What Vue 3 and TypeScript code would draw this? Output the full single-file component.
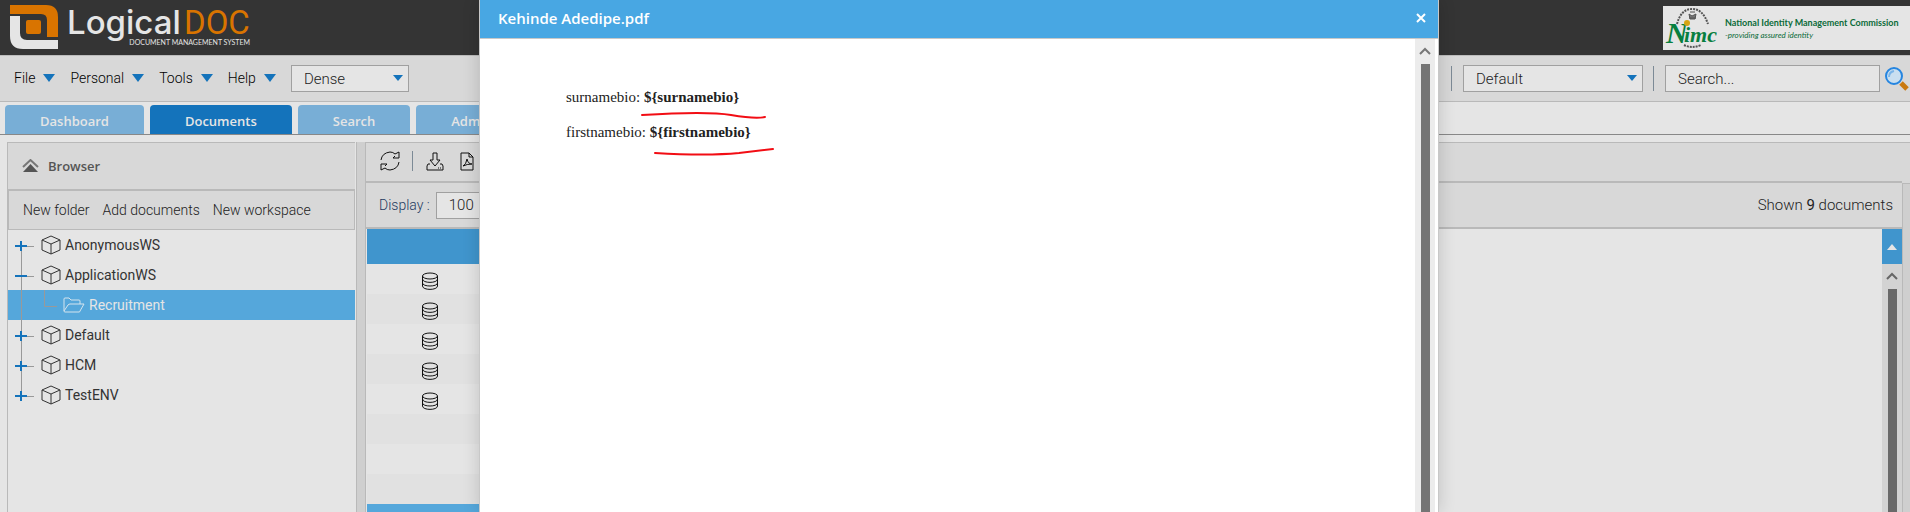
<script setup lang="ts">
import { ref } from 'vue'

interface Folder {
  name: string
  state: 'open' | 'closed'
  children: string[]
}

const menus: string[] = ['File', 'Personal', 'Tools', 'Help']
const tabs: string[] = ['Dashboard', 'Documents', 'Search', 'Administration']
const activeTab = ref('Documents')
const selected = ref('Recruitment')
const density = ref('Dense')
const searchMode = ref('Default')
const pageSize = ref('100')
const query = ref('')
const folders: Folder[] = [
  { name: 'AnonymousWS', state: 'closed', children: [] },
  { name: 'ApplicationWS', state: 'open', children: ['Recruitment'] },
  { name: 'Default', state: 'closed', children: [] },
  { name: 'HCM', state: 'closed', children: [] },
  { name: 'TestENV', state: 'closed', children: [] },
]
const fields: string[] = ['surnamebio', 'firstnamebio']
const documentRows: boolean[] = [true, true, true, true, true, false, false, false]
</script>

<template>
  <div class="page">
    <header class="banner">
      <svg class="logo" width="260" height="55" viewBox="0 0 260 55" role="img" aria-label="LogicalDOC">
        <path d="M10 5h36q12 0 12 12v20H47V20q0-6-6-6H10z" fill="#d97400" />
        <rect x="26" y="20" width="15" height="14" rx="2" fill="#d97400" />
        <path d="M10 16h10v17q0 7 7 7h31v9H23Q10 49 10 36z" fill="#e5e5e5" />
        <text x="67" y="34" class="logo-name">Logical</text>
        <text x="184" y="34" class="logo-doc">DOC</text>
        <text x="250" y="45" text-anchor="end" class="logo-sub">DOCUMENT MANAGEMENT SYSTEM</text>
      </svg>
      <div class="nimc">
        <svg width="54" height="44" viewBox="0 0 54 44" role="img" aria-label="Nimc">
          <path d="M14 18Q18 3 29 3T45 18" fill="none" stroke="#555" stroke-width="2" stroke-dasharray="2 1" />
          <path d="M21 39q8 4 17 0" fill="none" stroke="#555" stroke-width="2" stroke-dasharray="2 1" />
          <path d="M26 8l3 2 4-2-1 5h-5zM27 6h5M26 12h7" fill="#777" stroke="#555" />
          <text x="3" y="37" class="nimc-mark">N</text>
          <text x="21" y="36" class="nimc-mark nimc-small">imc</text>
          <circle cx="24" cy="17" r="3" fill="#d6a512" />
        </svg>
        <div class="nimc-text">
          <strong>National Identity Management Commission</strong>
          <em>-providing assured identity</em>
        </div>
      </div>
    </header>

    <nav class="menubar">
      <button v-for="m in menus" :key="m" class="menu">
        {{ m }}
        <svg width="12" height="8" viewBox="0 0 12 8"><path d="M0 0h12L6 8z" fill="#1473bb" /></svg>
      </button>
      <div class="combo density">
        <select v-model="density" aria-label="Density"><option>Dense</option></select>
        <svg width="10" height="6" viewBox="0 0 10 6"><path d="M0 0h10L5 6z" fill="#1473bb" /></svg>
      </div>
      <div class="search">
        <span class="rule"></span>
        <div class="combo mode">
          <select v-model="searchMode" aria-label="Search mode"><option>Default</option></select>
          <svg width="10" height="6" viewBox="0 0 10 6"><path d="M0 0h10L5 6z" fill="#1473bb" /></svg>
        </div>
        <span class="rule"></span>
        <input v-model="query" type="text" placeholder="Search..." aria-label="Search" />
        <button class="find" aria-label="Run search">
          <svg width="24" height="24" viewBox="0 0 24 24">
            <path d="M16 16l6 6" stroke="#c97a10" stroke-width="5" />
            <circle cx="9" cy="9" r="8" fill="#c9dff0" stroke="#2585e0" stroke-width="2" />
            <path d="M4 10q0-5 5-6" fill="none" stroke="#7bb5e8" stroke-width="2" />
          </svg>
        </button>
      </div>
    </nav>

    <div class="tabs" role="tablist">
      <button
        v-for="t in tabs"
        :key="t"
        role="tab"
        :aria-selected="t === activeTab"
        :class="['tab', { active: t === activeTab }]"
        @click="activeTab = t"
      >{{ t }}</button>
    </div>

    <main class="workspace">
      <aside class="browser">
        <h2>
          <svg width="17" height="14" viewBox="0 0 17 14">
            <path d="M1 8l7.500-7L16 8" fill="none" stroke="#777" stroke-width="2" />
            <path d="M1 13l7.500-8 7.500 8z" fill="#555" />
          </svg>
          Browser
        </h2>
        <div class="actions">
          <button>New folder</button>
          <button>Add documents</button>
          <button>New workspace</button>
        </div>
        <ul class="tree">
          <template v-for="(f, i) in folders" :key="f.name">
            <li class="node">
              <svg width="28" height="30" viewBox="0 0 28 30">
                <path
                  :d="i === 0 ? 'M13.500 15v15' : i === folders.length - 1 ? 'M13.500 0v15' : 'M13.500 0v30'"
                  stroke="#999"
                />
                <path d="M13 16.500h13" stroke="#999" />
                <path d="M7 16h12" stroke="#1473bb" stroke-width="2" />
                <path v-if="f.state === 'closed'" d="M13 11v10" stroke="#1473bb" stroke-width="2" />
              </svg>
              <svg width="20" height="20" viewBox="0 0 20 20" fill="none" stroke="#333">
                <path d="M10 1l9 4v10l-9 4-9-4V5zM1 5l9 4 9-4M10 9v10" />
              </svg>
              <button>{{ f.name }}</button>
            </li>
            <li v-for="c in f.children" :key="c" :class="['node', { selected: c === selected }]">
              <svg width="50" height="30" viewBox="0 0 50 30">
                <path d="M13.500 0v30M36.500 0v16.500H49" fill="none" stroke="#999" />
              </svg>
              <svg width="22" height="16" viewBox="0 0 22 16" fill="none" stroke="#d5e4ee">
                <path d="M1 14V2q0-1 1-1h4l2 2h8q1 0 1 1v3M1 14l4-6q1-1 2-1h14l-4 7q0 1-1 1H2q-1 0-1-1z" />
              </svg>
              <button @click="selected = c">{{ c }}</button>
            </li>
          </template>
        </ul>
      </aside>
      <div class="splitter"></div>
      <section class="documents">
        <div class="tools">
          <button aria-label="Refresh">
            <svg width="20" height="20" viewBox="0 0 20 20" fill="none" stroke="#111">
              <path d="M1 9q1-7 9-8 3 0 5 2l4-2v6h-6l2-2M19 11q-1 7-9 8-3 0-5-2l-4 2v-6h6l-2 2" />
            </svg>
          </button>
          <span class="rule short"></span>
          <button aria-label="Download">
            <svg width="20" height="19" viewBox="-1 0 20 19" fill="none" stroke="#111">
              <path d="M7 1h4v7h3l-5 6-5-6h3zM4 12H2l-1 2v4h16v-4l-1-2h-2M12 16h1M14 16h1" />
            </svg>
          </button>
          <button aria-label="Export as PDF">
            <svg width="20" height="19" viewBox="-3 0 20 19" fill="none" stroke="#111">
              <path d="M1 1h8l4 4v13H1zM9 1v4h4M3 14q3-1 4-7 1 5 5 5-5 0-9 2" />
            </svg>
          </button>
        </div>
        <div class="display">
          <label for="page-size">Display :</label>
          <div class="combo size">
            <select id="page-size" v-model="pageSize"><option>100</option></select>
          </div>
          <span class="shown">Shown <b>9</b> documents</span>
        </div>
        <div class="list">
          <table>
            <thead><tr><th></th></tr></thead>
            <tbody>
              <tr v-for="(filled, i) in documentRows" :key="i">
                <td>
                  <svg v-if="filled" width="16" height="18" viewBox="0 0 16 18" fill="none" stroke="#111">
                    <ellipse cx="8" cy="4" rx="7.500" ry="3" />
                    <path d="M.5 4v10c0 4.500 15 4.500 15 0V4M.5 7c0 4.500 15 4.500 15 0M.5 11c0 4 15 4 15 0" />
                  </svg>
                </td>
              </tr>
            </tbody>
            <tfoot><tr><td></td></tr></tfoot>
          </table>
          <div class="side">
            <button class="sort" aria-label="Sort ascending">
              <svg width="10" height="6" viewBox="0 0 10 6"><path d="M0 6h10L5 0z" fill="#e5e5e5" /></svg>
            </button>
            <div class="scrollbar">
              <svg width="12" height="8" viewBox="0 0 12 8"><path d="M1 7l5-5 5 5" fill="none" stroke="#666" stroke-width="2" /></svg>
              <span class="thumb"></span>
            </div>
          </div>
        </div>
      </section>
      <div class="edge"></div>
    </main>

    <section class="dialog" role="dialog" aria-labelledby="dialog-title">
      <header>
        <h1 id="dialog-title">Kehinde Adedipe.pdf</h1>
        <button aria-label="Close">
          <svg width="10" height="10" viewBox="0 0 10 10"><path d="M1 1l8 8M9 1L1 9" stroke="#fff" stroke-width="2" /></svg>
        </button>
      </header>
      <div class="viewer">
        <div class="paper">
          <p v-for="f in fields" :key="f">{{ f }}: <b>${{ '{' + f + '}' }}</b></p>
          <svg class="ink" width="136" height="44" viewBox="0 0 136 44" fill="none" stroke="#f20d14" stroke-width="2" stroke-linecap="round">
            <path d="M1 3Q66-1 90 3T124 5" />
            <path d="M14 41Q66 44 98 41L132 37" />
          </svg>
        </div>
        <div class="scrollbar light">
          <svg width="12" height="8" viewBox="0 0 12 8"><path d="M1 7l5-5 5 5" fill="none" stroke="#777" stroke-width="2" /></svg>
          <span class="thumb"></span>
        </div>
      </div>
    </section>
  </div>
</template>

<style>
body {
  margin: 0;
}
</style>

<style scoped>
* {
  box-sizing: border-box;
}
.page {
  position: relative;
  display: flex;
  flex-direction: column;
  min-height: 100vh;
  overflow: hidden;
  background: #e5e5e5;
  color: #222;
  font: 300 14px/20px Roboto, "Open Sans", sans-serif;
}
button {
  padding: 0;
  border: 0;
  background: none;
  color: inherit;
  font: inherit;
  white-space: nowrap;
}
svg {
  display: block;
  flex: none;
}
.banner {
  display: flex;
  justify-content: space-between;
  align-items: center;
  height: 55px;
  background: #343434;
}
.logo-name {
  font: 500 33px Inter, sans-serif;
  fill: #e5e5e5;
}
.logo-doc {
  font: 400 33px Roboto, sans-serif;
  fill: #d97400;
}
.logo-sub {
  font: 400 7px Lato, sans-serif;
  fill: #e5e5e5;
}
.nimc {
  display: flex;
  align-items: center;
  gap: 8px;
  width: 247px;
  height: 44px;
  overflow: hidden;
  background: #e5e5e5;
  color: #0b6b39;
  white-space: nowrap;
}
.nimc-mark {
  font: italic 700 30px "Liberation Serif", serif;
  fill: #087f3f;
}
.nimc-small {
  font-size: 22px;
}
.nimc-text {
  display: flex;
  flex-direction: column;
  padding-top: 2px;
  font: 9px/12px Lato, "Open Sans", sans-serif;
}
.nimc-text em {
  font-size: 8px;
}
.menubar {
  display: flex;
  align-items: center;
  height: 47px;
  padding-left: 14px;
  border-top: 1px solid #bcbcbc;
  border-bottom: 1px solid #b9b9b9;
  background: #d8d8d8;
}
.menu {
  display: flex;
  align-items: center;
  gap: 8px;
  margin-right: 15px;
  padding-bottom: 2px;
  color: #000;
}
.combo {
  position: relative;
  height: 27px;
}
.combo select,
.search input {
  width: 100%;
  height: 27px;
  padding: 0 12px;
  border: 1px solid #a0a0a0;
  border-radius: 0;
  outline: 0;
  background: #e5e5e5;
  color: #222;
  font: 300 15px Roboto, sans-serif;
  appearance: none;
}
.search input::placeholder {
  color: #222;
  opacity: 1;
}
.combo svg {
  position: absolute;
  top: 10px;
  right: 6px;
  pointer-events: none;
}
.density {
  width: 118px;
}
.search {
  display: flex;
  align-items: center;
  margin-left: auto;
  padding-right: 1px;
}
.rule {
  width: 1px;
  height: 25px;
  background: #7c8a96;
}
.mode {
  width: 180px;
  margin: 0 10px 0 11px;
}
.search input {
  width: 215px;
  margin: 0 5px 0 11px;
}
.tabs {
  display: flex;
  gap: 6px;
  height: 33px;
  padding: 3px 5px 0;
  border-bottom: 1px solid #888;
}
.tab {
  padding: 2px 35px 0;
  border-radius: 4px 4px 0 0;
  background: #78aed6;
  color: #e5e5e5;
  font: 600 13px/20px "Open Sans", sans-serif;
}
.tab.active {
  background: #1473bb;
}
.workspace {
  display: flex;
  flex: 1;
  padding: 7px 0 0 7px;
}
.browser {
  width: 348px;
  border-top: 1px solid #b9b9b9;
  border-left: 1px solid #b9b9b9;
}
.browser h2 {
  display: flex;
  align-items: center;
  gap: 9px;
  height: 47px;
  margin: 0;
  padding-left: 14px;
  border-bottom: 1px solid #b9b9b9;
  background: #d8d8d8;
  color: #555;
  font: 600 13px/20px "Open Sans", sans-serif;
}
.actions {
  display: flex;
  align-items: center;
  gap: 13px;
  height: 40px;
  padding-left: 14px;
  border: 1px solid #b9b9b9;
  background: #d8d8d8;
}
.tree {
  margin: 0;
  padding: 0;
  list-style: none;
}
.node {
  display: flex;
  align-items: center;
  height: 30px;
  color: #333;
  font-weight: 400;
}
.node svg + svg {
  margin: 0 4px 0 5px;
}
.node.selected {
  background: #55a7db;
  color: #e5e5e5;
}
.splitter {
  width: 10px;
  margin-left: 1px;
  border: solid #b9b9b9;
  border-width: 0 1px;
  background: #cfcfcf;
}
.documents {
  display: flex;
  flex: 1;
  flex-direction: column;
}
.tools {
  display: flex;
  align-items: center;
  height: 41px;
  gap: 12px;
  padding: 0 0 2px 14px;
  border-top: 1px solid #b9b9b9;
  border-bottom: 2px solid #b9b9b9;
  background: #d8d8d8;
}
.rule.short {
  height: 20px;
}
.display {
  display: flex;
  align-items: center;
  height: 46px;
  padding: 0 9px 0 13px;
  border-bottom: 2px solid #b9b9b9;
  background: #d8d8d8;
  color: #1f3a5f;
}
.size {
  width: 80px;
  margin-left: 6px;
}
.shown {
  margin-left: auto;
  color: #222;
  font-size: 15px;
}
.list {
  display: flex;
  flex: 1;
  justify-content: space-between;
  padding-left: 1px;
}
table {
  width: 60%;
  height: 0;
  border-collapse: collapse;
}
th {
  height: 35px;
  padding: 0;
  background: #4095cd;
}
td {
  height: 30px;
  padding: 3px 0 0 55px;
}
tbody tr:nth-child(even) {
  background: #e1e1e1;
}
tfoot td {
  height: 8px;
  padding: 0;
  background: #55a7db;
}
.side {
  display: flex;
  flex-direction: column;
  width: 20px;
}
.sort {
  display: flex;
  align-items: center;
  justify-content: center;
  height: 35px;
  background: #4095cd;
}
.scrollbar {
  display: flex;
  flex: 1;
  flex-direction: column;
  align-items: center;
  gap: 9px;
  padding-top: 8px;
  background: #d3d3d3;
}
.thumb {
  flex: 1;
  width: 9px;
  background: #696969;
}
.edge {
  width: 8px;
  border-left: 1px solid #b9b9b9;
  background: #cfcfcf;
}
.edge::before {
  display: block;
  height: 40px;
  margin-left: -1px;
  border: solid #b9b9b9;
  border-width: 1px 0;
  background: #d8d8d8;
  content: "";
}
.dialog {
  position: absolute;
  top: 0;
  right: 471px;
  bottom: 0;
  left: 479px;
  display: flex;
  flex-direction: column;
  border: solid #c8c8c8;
  border-width: 0 1px;
  background: #fff;
  box-shadow: 0 0 16px rgba(0, 0, 0, 0.16);
}
.dialog header {
  display: flex;
  align-items: center;
  justify-content: space-between;
  height: 39px;
  padding: 0 12px 2px 18px;
  border-bottom: 1px solid #c8c8c8;
  background: #48a7e3;
}
.dialog h1 {
  margin: 0;
  color: #fff;
  font: 600 15px/24px "Open Sans", sans-serif;
}
.viewer {
  display: flex;
  flex: 1;
  padding-right: 3px;
}
.paper {
  position: relative;
  flex: 1;
  padding: 41px 86px;
  color: #222;
  font: 15px/35px "Liberation Serif", serif;
}
.paper p {
  margin: 0;
}
.ink {
  position: absolute;
  top: 73px;
  left: 161px;
}
.scrollbar.light {
  flex: 0 0 20px;
  background: #ececec;
}
.scrollbar.light .thumb {
  background: #757575;
}
</style>
